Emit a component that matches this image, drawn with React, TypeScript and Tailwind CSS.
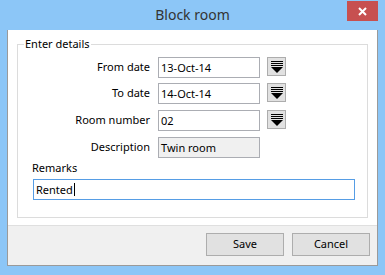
import React from 'react'

const DropIcon = () => (
  <svg width="12" height="12" viewBox="0 0 12 12">
    <rect x="0" y="0" width="12" height="1" fill="#000" />
    <rect x="0" y="2" width="12" height="1" fill="#000" />
    <rect x="0" y="4" width="12" height="1" fill="#000" />
    <polygon points="0,6 12,6 6,12" fill="#000" />
  </svg>
)

const PickButton = () => (
  <button className="w-[19px] h-[19px] flex items-center justify-center bg-[#e1e1e1] border border-[#adadad]">
    <DropIcon />
  </button>
)

const Row = ({
  label,
  value,
  mt,
  picker = true,
  disabled = false,
}: {
  label: string
  value: string
  mt: string
  picker?: boolean
  disabled?: boolean
}) => (
  <div className={`flex items-start ${mt}`}>
    <div className="w-[133px] h-[20px] leading-[20px] text-right pr-[1px]">{label}</div>
    <div
      className={`ml-[7px] w-[102px] h-[21px] border border-[#abadb3] px-[2px] leading-[19px] ${
        disabled ? 'bg-[#f0f0f0]' : 'bg-white'
      }`}
    >
      {value}
    </div>
    {picker && (
      <div className="ml-[7px]">
        <PickButton />
      </div>
    )}
  </div>
)

export default function App() {
  return (
    <div
      className="w-[385px] h-[275px] bg-[#8cc6f7] flex flex-col text-[11px] text-black"
      style={{ fontFamily: '"Noto Sans", sans-serif' }}
    >
      {/* title bar */}
      <div className="h-[30px] flex items-start relative">
        <div className="flex-1 text-center text-[14px] leading-[30px] text-[#333]">Block room</div>
        <div className="absolute right-[7px] top-[1px] w-[31px] h-[20px] bg-[#c75050] flex items-center justify-center">
          <svg width="9" height="9" viewBox="0 0 9 9">
            <path d="M1 1 L8 8 M8 1 L1 8" stroke="#fff" strokeWidth="2" />
          </svg>
        </div>
      </div>

      {/* client */}
      <div className="mx-[7px] w-[371px] h-[236px] border-x border-b border-[#9a9a9a] flex flex-col">
        <div className="bg-white h-[195px] px-[9px] pt-[6px]">
          <fieldset className="border border-[#dcdcdc] h-[182px] px-0">
            <legend className="ml-[6px] px-[1px] leading-[16px]">Enter details</legend>
            <Row label="From date" value="13-Oct-14" mt="mt-[5px]" />
            <Row label="To date" value="14-Oct-14" mt="mt-[5px]" />
            <Row label="Room number" value="02" mt="mt-[6px]" />
            <Row label="Description" value="Twin room" mt="mt-[6px]" picker={false} disabled />
            <div className="ml-[14px] mt-[1px] leading-[18px]">Remarks</div>
            <div className="ml-[15px] mt-[2px] w-[322px] h-[21px] border border-[#569de5] px-[2px] leading-[19px] flex items-center">
              Rented
              <span className="inline-block w-[1px] h-[13px] bg-black ml-[1px]" />
            </div>
          </fieldset>
        </div>
        <div className="flex-1 bg-[#f0f0f0] border-t border-[#dfdfdf] flex justify-end items-start gap-[8px] pt-[7px] pr-[7px]">
          <button className="w-[78px] h-[23px] bg-[#e1e1e1] border border-[#adadad]">Save</button>
          <button className="w-[78px] h-[23px] bg-[#e1e1e1] border border-[#adadad]">Cancel</button>
        </div>
      </div>
    </div>
  )
}
